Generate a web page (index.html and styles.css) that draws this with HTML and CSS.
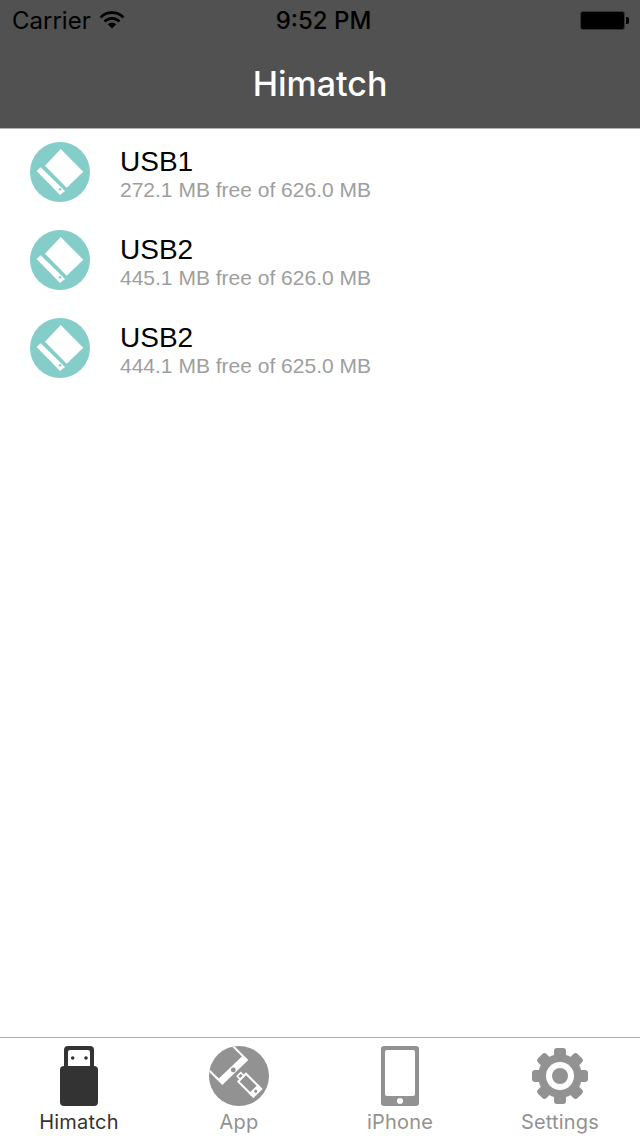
FILE: index.html

```html
<!DOCTYPE html>
<html lang="en">
<head>
    <meta charset="UTF-8">
    <title>Himatch</title>
    <meta name="viewport" content="width=device-width, initial-scale=1.0">
    <link rel="stylesheet" href="styles.css">
</head>
<body>
<svg class="defs" width="0" height="0">
    <symbol id="disk" viewBox="0 0 60 60">
        <circle cx="30" cy="30" r="30" fill="#85cdc9"/>
        <polygon points="30.7,7 53.3,29.7 36.7,45.7 15,23.7" fill="#fff"/>
        <polygon points="10.7,25.3 35,49 30,53 6.7,29" fill="#fff"/>
        <circle cx="30" cy="47.3" r="1.3" fill="#85cdc9"/>
    </symbol>
</svg>
<div class="app">
    <div class="header">
        <div class="status">
            <div class="status-left">
                <span class="carrier">Carrier</span>
                <svg class="wifi" width="26" height="18" viewBox="0 0 26 18">
                    <path d="M1.5 6.5a16 16 0 0 1 23 0" fill="none" stroke="#000" stroke-width="2.6"/>
                    <path d="M5.5 10.5a10.5 10.5 0 0 1 15 0" fill="none" stroke="#000" stroke-width="2.6"/>
                    <path d="M8.7 13.2a6 6 0 0 1 8.6 0L13 17.5z" fill="#000"/>
                </svg>
            </div>
            <div class="time">9:52 PM</div>
            <div class="status-right">
                <div class="battery"></div>
                <div class="battery-nub"></div>
            </div>
        </div>
        <div class="title">Himatch</div>
    </div>

    <div class="list">
        <div class="row">
            <svg class="row-icon" width="60" height="60"><use href="#disk"/></svg>
            <div class="row-text">
                <div class="row-name">USB1</div>
                <div class="row-size">272.1 MB free of 626.0 MB</div>
            </div>
        </div>
        <div class="row">
            <svg class="row-icon" width="60" height="60"><use href="#disk"/></svg>
            <div class="row-text">
                <div class="row-name">USB2</div>
                <div class="row-size">445.1 MB free of 626.0 MB</div>
            </div>
        </div>
        <div class="row">
            <svg class="row-icon" width="60" height="60"><use href="#disk"/></svg>
            <div class="row-text">
                <div class="row-name">USB2</div>
                <div class="row-size">444.1 MB free of 625.0 MB</div>
            </div>
        </div>
    </div>

    <div class="tabs">
        <div class="tab active">
            <svg width="60" height="60" viewBox="0 0 60 60">
                <rect x="11" y="20" width="38" height="40" rx="4" fill="#333"/>
                <path fill-rule="evenodd" fill="#333" d="M19 0h22a4 4 0 0 1 4 4v18H15V4a4 4 0 0 1 4-4zM21 4a2 2 0 0 0-2 2v14h22V6a2 2 0 0 0-2-2z"/>
                <circle cx="23.7" cy="12" r="1.8" fill="#333"/>
                <circle cx="37" cy="12" r="1.8" fill="#333"/>
            </svg>
            <span>Himatch</span>
        </div>
        <div class="tab">
            <svg width="60" height="60" viewBox="0 0 60 60">
                <defs>
                    <clipPath id="round"><circle cx="30" cy="30" r="30"/></clipPath>
                </defs>
                <circle cx="30" cy="30" r="30" fill="#929292"/>
                <g clip-path="url(#round)">
                    <polygon points="39.3,14 13.3,39 -21.7,4 4.3,-21" fill="#fff"/>
                    <polygon points="32.9,10.5 9.8,32.6 -25.2,-2.4 -2.1,-24.5" fill="#929292"/>
                </g>
                <circle cx="24.3" cy="24" r="2.4" fill="#929292"/>
                <g transform="translate(39.5 38) rotate(45)">
                    <rect x="-9" y="-5.5" width="18" height="11" fill="none" stroke="#fff" stroke-width="2"/>
                    <rect x="-13.5" y="-2.5" width="4.5" height="5" fill="none" stroke="#fff" stroke-width="1.6"/>
                    <rect x="7" y="-6.5" width="6.5" height="13" fill="#fff"/>
                    <circle cx="10.2" cy="0" r="1.5" fill="#929292"/>
                </g>
            </svg>
            <span>App</span>
        </div>
        <div class="tab">
            <svg width="60" height="60" viewBox="0 0 60 60">
                <path fill-rule="evenodd" fill="#929292" d="M14 0h32a3 3 0 0 1 3 3v54a3 3 0 0 1-3 3H14a3 3 0 0 1-3-3V3a3 3 0 0 1 3-3zM17 4a2 2 0 0 0-2 2v42a2 2 0 0 0 2 2h26a2 2 0 0 0 2-2V6a2 2 0 0 0-2-2z"/>
                <circle cx="30" cy="55" r="3" fill="#fff"/>
            </svg>
            <span>iPhone</span>
        </div>
        <div class="tab">
            <svg width="60" height="60" viewBox="0 0 60 60">
                <g fill="#929292">
                    <circle cx="30" cy="30" r="22"/>
                    <rect id="tooth" x="24" y="2" width="12" height="14" rx="3"/>
                    <use href="#tooth" transform="rotate(45 30 30)"/>
                    <use href="#tooth" transform="rotate(90 30 30)"/>
                    <use href="#tooth" transform="rotate(135 30 30)"/>
                    <use href="#tooth" transform="rotate(180 30 30)"/>
                    <use href="#tooth" transform="rotate(225 30 30)"/>
                    <use href="#tooth" transform="rotate(270 30 30)"/>
                    <use href="#tooth" transform="rotate(315 30 30)"/>
                </g>
                <circle cx="30" cy="30" r="14" fill="#fff"/>
                <circle cx="30" cy="30" r="8" fill="#929292"/>
            </svg>
            <span>Settings</span>
        </div>
    </div>
</div>
</body>
</html>
```

FILE: styles.css

```css
html, body {
    height: 100%;
    margin: 0;
    background: #fff;
    font-family: "Liberation Sans", Arial, sans-serif;
}
.defs {
    display: block;
    height: 0;
}
.app {
    display: flex;
    flex-direction: column;
    height: 1136px;
}
.header {
    position: relative;
    background: #515151;
    box-shadow: 0 1px 0 #b2b2b2;
    height: 128px;
}
.status {
    display: flex;
    align-items: center;
    justify-content: space-between;
    height: 40px;
    padding: 0 11px 0 12px;
    color: #000;
    font-family: Inter, sans-serif;
    font-size: 24px;
}
.status-left {
    display: flex;
    align-items: center;
    gap: 8px;
    width: 183px;
}
.status-right {
    display: flex;
    align-items: center;
    justify-content: flex-end;
    width: 177px;
}
.carrier {
    font-weight: 400;
}
.wifi {
    display: block;
}
.time {
    font-weight: 500;
}
.battery {
    width: 43px;
    height: 17px;
    background: #000;
    border: 1px solid #333;
    border-radius: 3px;
}
.battery-nub {
    width: 3px;
    height: 7px;
    margin-left: 1px;
    background: #000;
    border-radius: 0 2px 2px 0;
}
.title {
    height: 88px;
    line-height: 88px;
    text-align: center;
    color: #fff;
    font-family: Inter, sans-serif;
    font-size: 34px;
    font-weight: 500;
}
.list {
    flex: 1;
}
.row {
    display: flex;
    align-items: center;
    height: 88px;
    padding-left: 30px;
}
.row-icon {
    display: block;
    margin-right: 30px;
}
.row-text {
    padding-top: 4px;
}
.row-name {
    font-size: 28px;
    line-height: 32px;
    color: #000;
}
.row-size {
    margin-top: -1px;
    font-size: 21px;
    line-height: 26px;
    color: #9e9e9e;
}
.tabs {
    display: grid;
    grid-template-columns: 158px 162px 160px 160px;
    height: 98px;
    border-top: 1px solid #b2b2b2;
}
.tab {
    display: flex;
    flex-direction: column;
    align-items: center;
    padding-top: 8px;
    color: #929292;
    font-family: Inter, sans-serif;
    font-size: 20px;
    letter-spacing: 0.2px;
    line-height: 28px;
}
.tab svg {
    display: block;
    margin-bottom: 2px;
}
.tab.active {
    color: #333;
}
```
